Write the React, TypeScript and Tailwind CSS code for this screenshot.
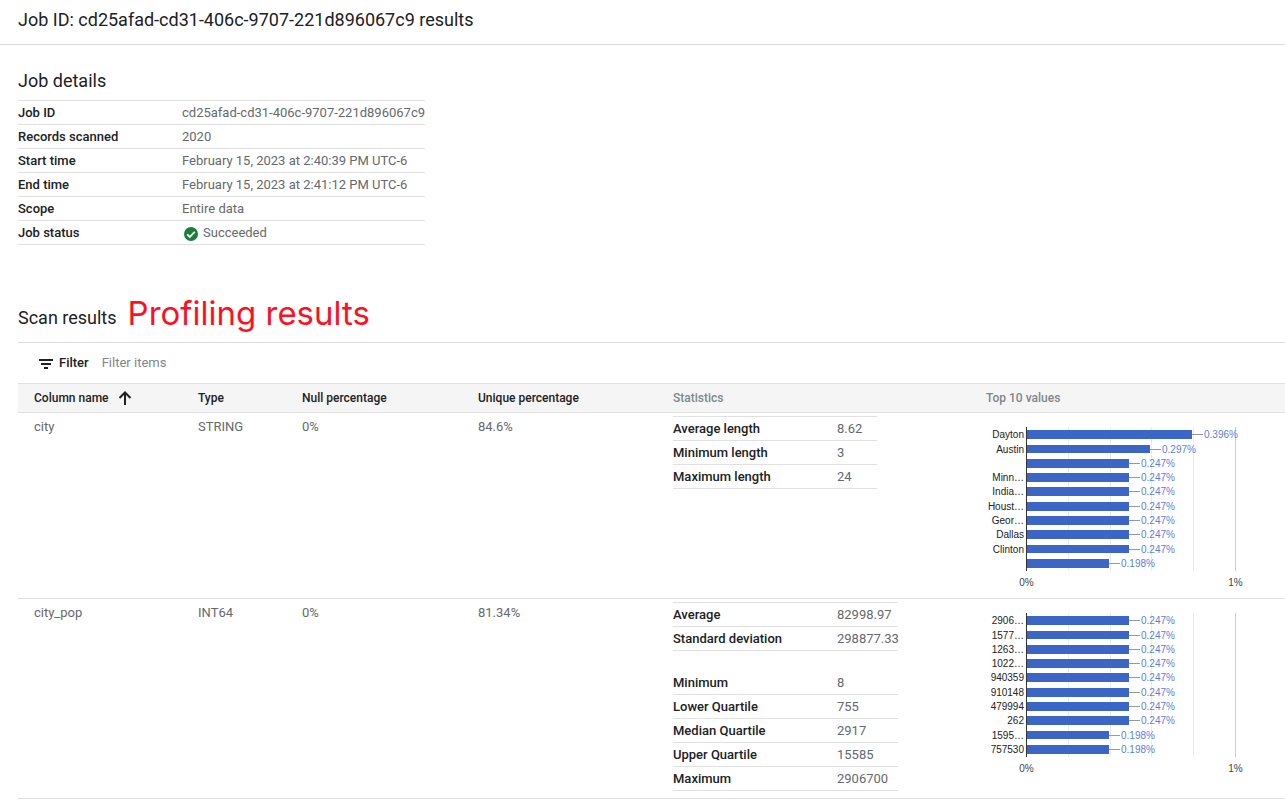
const font = "font-['Roboto',sans-serif]";

function Row({ label, value, labelW }: { label: string; value: React.ReactNode; labelW: string }) {
  return (
    <div className="flex h-6 items-center border-b border-[#e0e0e0]">
      <div className={`${labelW} shrink-0 font-medium text-[#202124]`}>{label}</div>
      <div className="whitespace-nowrap text-[#65696e]">{value}</div>
    </div>
  );
}

function Stats({ rows, w, top = true }: { rows: [string, string][]; w: string; top?: boolean }) {
  return (
    <div className={`${w} ${top ? "border-t border-[#e0e0e0]" : ""}`}>
      {rows.map(([a, b]) => (
        <Row key={a} label={a} value={b} labelW="w-[164px]" />
      ))}
    </div>
  );
}

type Bar = { label: string; y: number; h: number; w: number; pct: string };

function Chart({ bars, axisTop, axisBottom, labelY, height }: { bars: Bar[]; axisTop: number; axisBottom: number; labelY: number; height: number }) {
  const x0 = 41;
  const grid = [82, 124, 165, 207];
  return (
    <svg width="299" height={height} className="block" shapeRendering="crispEdges" style={{ fontFamily: "'Liberation Sans', Arial, sans-serif" }}>
      {grid.map((g) => (
        <rect key={g} x={g} y={axisTop} width="1" height={axisBottom - axisTop} fill="#ebebeb" />
      ))}
      <rect x="249" y={axisTop} width="1" height={axisBottom - axisTop} fill="#cccccc" />
      {bars.map((b) => (
        <g key={b.y}>
          <rect x={x0} y={b.y} width={b.w} height={b.h} fill="#3b66c6" />
          <rect x={x0 + b.w} y={b.y + Math.floor(b.h / 2)} width="11" height="1" fill="#999999" />
          <text x={x0 - 3} y={b.y + b.h / 2 + 3.5} textAnchor="end" fontSize="10" fill="#222222" shapeRendering="auto">{b.label}</text>
          <text x={x0 + b.w + 12} y={b.y + b.h / 2 + 3.5} fontSize="10" fill="#5b7fd6" shapeRendering="auto">{b.pct}</text>
        </g>
      ))}
      <rect x={x0 - 1} y={axisTop} width="1" height={axisBottom - axisTop} fill="#333333" />
      <text x={x0 - 0.5} y={labelY} textAnchor="middle" fontSize="10" fill="#444444" shapeRendering="auto">0%</text>
      <text x="249.5" y={labelY} textAnchor="middle" fontSize="10" fill="#444444" shapeRendering="auto">1%</text>
    </svg>
  );
}

const bars1: Bar[] = [
  { label: "Dayton", y: 17, h: 9, w: 165, pct: "0.396%" },
  { label: "Austin", y: 32, h: 8, w: 123, pct: "0.297%" },
  { label: "", y: 46, h: 9, w: 102, pct: "0.247%" },
  { label: "Minn…", y: 60, h: 9, w: 102, pct: "0.247%" },
  { label: "India…", y: 74, h: 9, w: 102, pct: "0.247%" },
  { label: "Houst…", y: 89, h: 9, w: 102, pct: "0.247%" },
  { label: "Geor…", y: 103, h: 9, w: 102, pct: "0.247%" },
  { label: "Dallas", y: 117, h: 9, w: 102, pct: "0.247%" },
  { label: "Clinton", y: 132, h: 8, w: 102, pct: "0.247%" },
  { label: "", y: 146, h: 9, w: 82, pct: "0.198%" },
];

const bars2: Bar[] = [
  { label: "2906…", y: 17, h: 9, w: 102, pct: "0.247%" },
  { label: "1577…", y: 32, h: 8, w: 102, pct: "0.247%" },
  { label: "1263…", y: 46, h: 9, w: 102, pct: "0.247%" },
  { label: "1022…", y: 60, h: 9, w: 102, pct: "0.247%" },
  { label: "940359", y: 74, h: 9, w: 102, pct: "0.247%" },
  { label: "910148", y: 89, h: 9, w: 102, pct: "0.247%" },
  { label: "479994", y: 103, h: 9, w: 102, pct: "0.247%" },
  { label: "262", y: 117, h: 9, w: 102, pct: "0.247%" },
  { label: "1595…", y: 132, h: 8, w: 82, pct: "0.198%" },
  { label: "757530", y: 146, h: 9, w: 82, pct: "0.198%" },
];

const cols = "grid grid-cols-[180px_104px_176px_195px_313px_299px]";

function Cell({ children }: { children: React.ReactNode }) {
  return <div className="pt-[5px] text-[#65696e]">{children}</div>;
}

export default function App() {
  return (
    <div className={`${font} h-[802px] w-[1285px] overflow-hidden bg-white text-[13px] leading-[18px]`}>
      <header className="flex h-[45px] items-center border-b border-[#dadce0] pb-[5px] pl-[18px] text-[18px] text-[#202124]">
        Job ID: cd25afad-cd31-406c-9707-221d896067c9 results
      </header>

      <section className="pl-[18px]">
        <h2 className="flex h-[55px] items-end pb-[10px] text-[18px] text-[#202124]">Job details</h2>
        <div className="w-[407px] border-t border-[#e0e0e0]">
          <Row labelW="w-[164px]" label="Job ID" value="cd25afad-cd31-406c-9707-221d896067c9" />
          <Row labelW="w-[164px]" label="Records scanned" value="2020" />
          <Row labelW="w-[164px]" label="Start time" value="February 15, 2023 at 2:40:39 PM UTC-6" />
          <Row labelW="w-[164px]" label="End time" value="February 15, 2023 at 2:41:12 PM UTC-6" />
          <Row labelW="w-[164px]" label="Scope" value="Entire data" />
          <Row
            labelW="w-[164px]"
            label="Job status"
            value={
              <span className="flex items-center gap-[5px] pl-[2px]">
                <svg width="14" height="14" viewBox="0 0 24 24" className="mt-[2px]">
                  <circle cx="12" cy="12" r="12" fill="#188038" />
                  <path d="M5.5 12.5l4.5 4.5L18.5 8.5" fill="none" stroke="#fff" strokeWidth="3" />
                </svg>
                Succeeded
              </span>
            }
          />
        </div>

        <div className="flex h-[98px] items-end border-b border-[#dadce0]">
          <h2 className="mb-[15px] text-[18px] text-[#202124]">Scan results</h2>
          <span className="mb-[7px] ml-[11px] font-['Inter',sans-serif] text-[33px] leading-[44px] text-[#ff0f24]">Profiling results</span>
        </div>

        <div className="flex h-10 items-center pl-[21px]">
          <svg width="14" height="10" viewBox="0 0 14 10" className="mt-[1px]" shapeRendering="crispEdges">
            <path d="M0 0h14v2H0zM2 4h10v2H2zM5 8h4v2H5z" fill="#202124" />
          </svg>
          <span className="ml-[6px] font-medium text-[#202124]">Filter</span>
          <span className="ml-[13px] text-[#80868b]">Filter items</span>
        </div>

        <div className={`${cols} h-[30px] items-center border-y border-[#e0e0e0] bg-[#f5f5f5] text-[12px] font-medium text-[#202124]`}>
          <div className="flex items-center pl-4">
            Column name
            <svg width="14" height="14" viewBox="0 0 14 14" className="ml-[9px]">
              <path d="M7 14V1.5M1.5 7L7 1.5 12.5 7" fill="none" stroke="#202124" strokeWidth="2" />
            </svg>
          </div>
          <div>Type</div>
          <div>Null percentage</div>
          <div>Unique percentage</div>
          <div className="text-[#80868b]">Statistics</div>
          <div className="text-[#80868b]">Top 10 values</div>
        </div>

        <div className={`${cols} h-[186px] border-b border-[#e0e0e0]`}>
          <div className="pl-4"><Cell>city</Cell></div>
          <Cell>STRING</Cell>
          <Cell>0%</Cell>
          <Cell>84.6%</Cell>
          <div className="pt-[3px]">
            <Stats w="w-[204px]" rows={[["Average length", "8.62"], ["Minimum length", "3"], ["Maximum length", "24"]]} />
          </div>
          <Chart bars={bars1} axisTop={14} axisBottom={158} labelY={173} height={185} />
        </div>

        <div className={`${cols} h-[200px] border-b border-[#e0e0e0]`}>
          <div className="pl-4"><Cell>city_pop</Cell></div>
          <Cell>INT64</Cell>
          <Cell>0%</Cell>
          <Cell>81.34%</Cell>
          <div className="pt-[3px]">
            <Stats w="w-[225px]" rows={[["Average", "82998.97"], ["Standard deviation", "298877.33"]]} />
            <div className="h-5" />
            <Stats w="w-[225px]" top={false} rows={[["Minimum", "8"], ["Lower Quartile", "755"], ["Median Quartile", "2917"], ["Upper Quartile", "15585"], ["Maximum", "2906700"]]} />
          </div>
          <Chart bars={bars2} axisTop={14} axisBottom={158} labelY={173} height={199} />
        </div>
      </section>
    </div>
  );
}
